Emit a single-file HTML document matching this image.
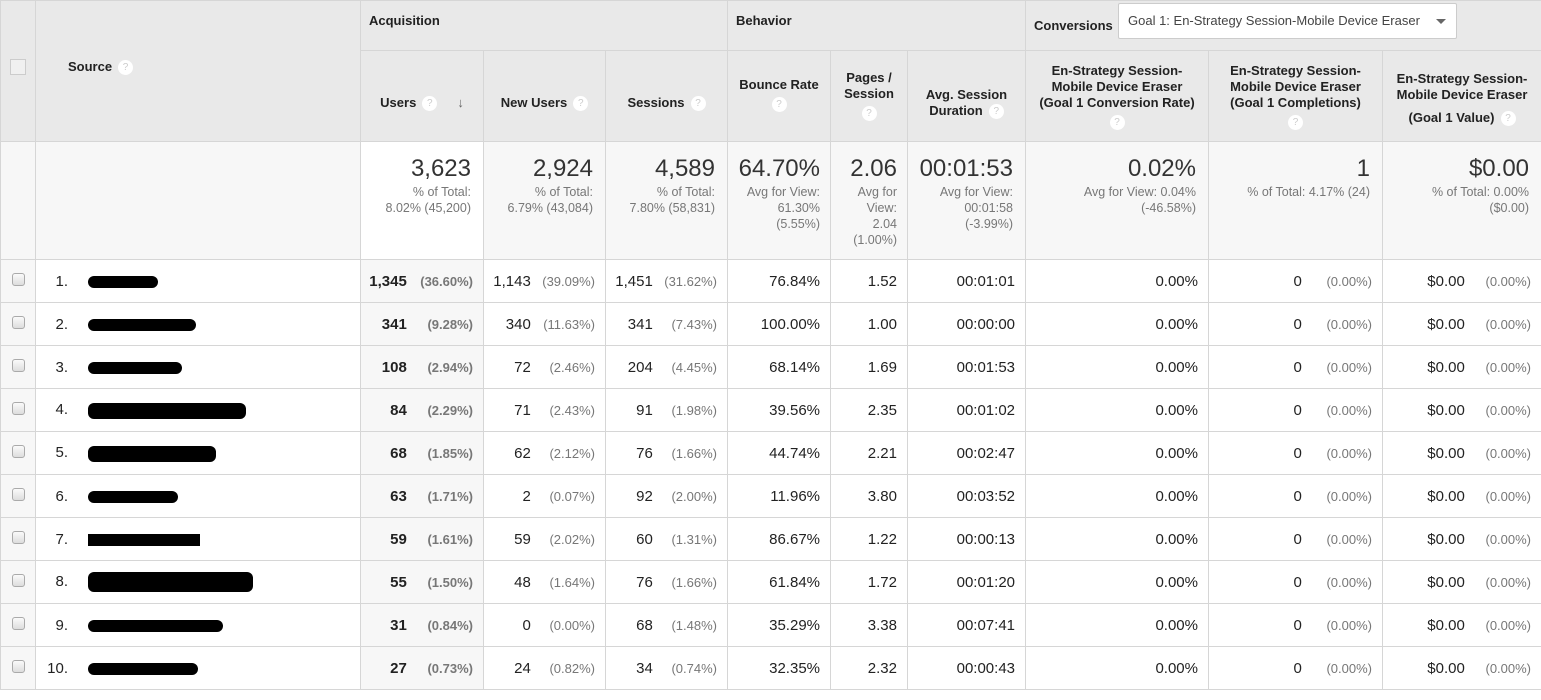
<!DOCTYPE html>
<html><head><meta charset="utf-8">
<style>
*{box-sizing:border-box;margin:0;padding:0}
body{width:1541px;height:700px;background:#fff;font-family:"Liberation Sans",Arial,sans-serif;color:#222;overflow:hidden;position:relative}
table{border-collapse:collapse;table-layout:fixed;position:absolute;left:0;top:0;width:1541px}
td,th{border:1px solid #d6d6d6;vertical-align:middle}
th{background:#e9e9e9;font-weight:bold;font-size:13px;color:#222}
.q{display:inline-block;width:15px;height:15px;border-radius:50%;background:#fff;color:#ccc;font-size:10px;line-height:15px;text-align:center;font-weight:normal;vertical-align:middle;margin-left:6px}
.g{height:50px;text-align:left;padding-left:8px}
.h{height:91px;text-align:center;line-height:16px}
.tot td{height:118px;background:#f7f7f7;text-align:right;vertical-align:top;padding:14px 12px 0 4px;color:#777;font-size:12.5px;line-height:16px}
.tot td.s{background:#fff}
.big{font-size:24px;color:#333;line-height:26px;display:block;margin-bottom:2px}
.r td{height:43px;font-size:15px;text-align:right;padding-right:10px;color:#222}
.r td.c{background:#f7f7f7;text-align:center;padding:0}
.r td.u{background:#f7f7f7;font-weight:bold}
.p{display:inline-block;text-align:right;color:#777;font-size:13px;font-weight:normal}
.r td.u .p{font-weight:bold;width:62px}
.cb{display:inline-block;width:13px;height:13px;border:1px solid #aaa;border-radius:3px;background:linear-gradient(#fafafa,#ddd)}
.src{text-align:left!important;padding-left:0!important}
.n{display:inline-block;width:32px;text-align:right;margin-right:20px}
.bar{display:inline-block;height:12px;background:#000;border-radius:6px;vertical-align:middle}
</style></head><body>
<table>
<colgroup><col style="width:35px"><col style="width:325px"><col style="width:123px"><col style="width:122px"><col style="width:122px"><col style="width:103px"><col style="width:77px"><col style="width:118px"><col style="width:183px"><col style="width:174px"><col style="width:159px"></colgroup>
<tr><th rowspan="2" style="text-align:center;vertical-align:top;padding-top:58px"><span style="display:inline-block;width:16px;height:16px;border:1px solid #ccc;background:#f0f0f0"></span></th>
<th rowspan="2" style="text-align:left;padding-left:32px;vertical-align:top;padding-top:58px">Source<span class="q">?</span></th>
<th colspan="3" class="g" style="vertical-align:top;padding-top:12px">Acquisition</th>
<th colspan="3" class="g" style="vertical-align:top;padding-top:12px">Behavior</th>
<th colspan="3" class="g" style="position:relative;border-right:none">Conversions
<span style="position:absolute;left:92px;top:2px;width:339px;height:36px;border:1px solid #ccc;border-radius:2px;background:#fff;font-weight:normal;font-size:13px;color:#444;line-height:34px;padding-left:9px">Goal 1: En-Strategy Session-Mobile Device Eraser<span style="position:absolute;right:10px;top:15px;border:5px solid transparent;border-top-color:#666;border-bottom:none"></span></span></th></tr>
<tr>
<th class="h" style="padding-top:14px">Users<span class="q">?</span><span style="margin-left:20px;color:#666">↓</span></th>
<th class="h" style="padding-top:14px">New Users<span class="q">?</span></th>
<th class="h" style="padding-top:14px">Sessions<span class="q">?</span></th>
<th class="h" style="vertical-align:top;padding-top:26px">Bounce Rate<br><span class="q" style="margin:4px 0 0">?</span></th>
<th class="h" style="vertical-align:top;padding-top:19px">Pages /<br>Session<br><span class="q" style="margin:4px 0 0">?</span></th>
<th class="h" style="padding-top:14px">Avg. Session<br>Duration<span class="q">?</span></th>
<th class="h">En-Strategy Session-<br>Mobile Device Eraser<br>(Goal 1 Conversion Rate)<br><span class="q" style="margin:4px 0 0">?</span></th>
<th class="h">En-Strategy Session-<br>Mobile Device Eraser<br>(Goal 1 Completions)<br><span class="q" style="margin:4px 0 0">?</span></th>
<th class="h" style="vertical-align:top;padding-top:20px">En-Strategy Session-<br>Mobile Device Eraser<br><span style="line-height:30px">(Goal 1 Value)</span><span class="q">?</span></th>
</tr>
<tr class="tot"><td></td><td></td>
<td class="s"><span class="big">3,623</span>% of Total:<br>8.02% (45,200)</td>
<td><span class="big">2,924</span>% of Total:<br>6.79% (43,084)</td>
<td><span class="big">4,589</span>% of Total:<br>7.80% (58,831)</td>
<td style="padding-right:10px"><span class="big">64.70%</span>Avg for View:<br>61.30%<br>(5.55%)</td>
<td style="padding-right:10px"><span class="big">2.06</span>Avg for<br>View:<br>2.04<br>(1.00%)</td>
<td><span class="big">00:01:53</span>Avg for View:<br>00:01:58<br>(-3.99%)</td>
<td><span class="big">0.02%</span>Avg for View: 0.04%<br>(-46.58%)</td>
<td><span class="big">1</span>% of Total: 4.17% (24)</td>
<td><span class="big">$0.00</span>% of Total: 0.00%<br>($0.00)</td></tr>
<tr class="r"><td class="c"><span class="cb"></span></td><td class="src"><span class="n">1.</span><span class="bar" style="width:70px"></span></td><td class="u">1,345 <span class="p">(36.60%)</span></td><td>1,143 <span class="p" style="width:60px">(39.09%)</span></td><td>1,451 <span class="p" style="width:60px">(31.62%)</span></td><td>76.84%</td><td>1.52</td><td>00:01:01</td><td>0.00%</td><td>0 <span class="p" style="width:66px">(0.00%)</span></td><td>$0.00 <span class="p" style="width:62px">(0.00%)</span></td></tr>
<tr class="r"><td class="c"><span class="cb"></span></td><td class="src"><span class="n">2.</span><span class="bar" style="width:108px"></span></td><td class="u">341 <span class="p">(9.28%)</span></td><td>340 <span class="p" style="width:60px">(11.63%)</span></td><td>341 <span class="p" style="width:60px">(7.43%)</span></td><td>100.00%</td><td>1.00</td><td>00:00:00</td><td>0.00%</td><td>0 <span class="p" style="width:66px">(0.00%)</span></td><td>$0.00 <span class="p" style="width:62px">(0.00%)</span></td></tr>
<tr class="r"><td class="c"><span class="cb"></span></td><td class="src"><span class="n">3.</span><span class="bar" style="width:94px"></span></td><td class="u">108 <span class="p">(2.94%)</span></td><td>72 <span class="p" style="width:60px">(2.46%)</span></td><td>204 <span class="p" style="width:60px">(4.45%)</span></td><td>68.14%</td><td>1.69</td><td>00:01:53</td><td>0.00%</td><td>0 <span class="p" style="width:66px">(0.00%)</span></td><td>$0.00 <span class="p" style="width:62px">(0.00%)</span></td></tr>
<tr class="r"><td class="c"><span class="cb"></span></td><td class="src"><span class="n">4.</span><span class="bar" style="width:158px;height:16px"></span></td><td class="u">84 <span class="p">(2.29%)</span></td><td>71 <span class="p" style="width:60px">(2.43%)</span></td><td>91 <span class="p" style="width:60px">(1.98%)</span></td><td>39.56%</td><td>2.35</td><td>00:01:02</td><td>0.00%</td><td>0 <span class="p" style="width:66px">(0.00%)</span></td><td>$0.00 <span class="p" style="width:62px">(0.00%)</span></td></tr>
<tr class="r"><td class="c"><span class="cb"></span></td><td class="src"><span class="n">5.</span><span class="bar" style="width:128px;height:16px"></span></td><td class="u">68 <span class="p">(1.85%)</span></td><td>62 <span class="p" style="width:60px">(2.12%)</span></td><td>76 <span class="p" style="width:60px">(1.66%)</span></td><td>44.74%</td><td>2.21</td><td>00:02:47</td><td>0.00%</td><td>0 <span class="p" style="width:66px">(0.00%)</span></td><td>$0.00 <span class="p" style="width:62px">(0.00%)</span></td></tr>
<tr class="r"><td class="c"><span class="cb"></span></td><td class="src"><span class="n">6.</span><span class="bar" style="width:90px"></span></td><td class="u">63 <span class="p">(1.71%)</span></td><td>2 <span class="p" style="width:60px">(0.07%)</span></td><td>92 <span class="p" style="width:60px">(2.00%)</span></td><td>11.96%</td><td>3.80</td><td>00:03:52</td><td>0.00%</td><td>0 <span class="p" style="width:66px">(0.00%)</span></td><td>$0.00 <span class="p" style="width:62px">(0.00%)</span></td></tr>
<tr class="r"><td class="c"><span class="cb"></span></td><td class="src"><span class="n">7.</span><span class="bar" style="width:112px;border-radius:0"></span></td><td class="u">59 <span class="p">(1.61%)</span></td><td>59 <span class="p" style="width:60px">(2.02%)</span></td><td>60 <span class="p" style="width:60px">(1.31%)</span></td><td>86.67%</td><td>1.22</td><td>00:00:13</td><td>0.00%</td><td>0 <span class="p" style="width:66px">(0.00%)</span></td><td>$0.00 <span class="p" style="width:62px">(0.00%)</span></td></tr>
<tr class="r"><td class="c"><span class="cb"></span></td><td class="src"><span class="n">8.</span><span class="bar" style="width:165px;height:20px"></span></td><td class="u">55 <span class="p">(1.50%)</span></td><td>48 <span class="p" style="width:60px">(1.64%)</span></td><td>76 <span class="p" style="width:60px">(1.66%)</span></td><td>61.84%</td><td>1.72</td><td>00:01:20</td><td>0.00%</td><td>0 <span class="p" style="width:66px">(0.00%)</span></td><td>$0.00 <span class="p" style="width:62px">(0.00%)</span></td></tr>
<tr class="r"><td class="c"><span class="cb"></span></td><td class="src"><span class="n">9.</span><span class="bar" style="width:135px"></span></td><td class="u">31 <span class="p">(0.84%)</span></td><td>0 <span class="p" style="width:60px">(0.00%)</span></td><td>68 <span class="p" style="width:60px">(1.48%)</span></td><td>35.29%</td><td>3.38</td><td>00:07:41</td><td>0.00%</td><td>0 <span class="p" style="width:66px">(0.00%)</span></td><td>$0.00 <span class="p" style="width:62px">(0.00%)</span></td></tr>
<tr class="r"><td class="c"><span class="cb"></span></td><td class="src"><span class="n">10.</span><span class="bar" style="width:110px"></span></td><td class="u">27 <span class="p">(0.73%)</span></td><td>24 <span class="p" style="width:60px">(0.82%)</span></td><td>34 <span class="p" style="width:60px">(0.74%)</span></td><td>32.35%</td><td>2.32</td><td>00:00:43</td><td>0.00%</td><td>0 <span class="p" style="width:66px">(0.00%)</span></td><td>$0.00 <span class="p" style="width:62px">(0.00%)</span></td></tr>
</table>
</body></html>
